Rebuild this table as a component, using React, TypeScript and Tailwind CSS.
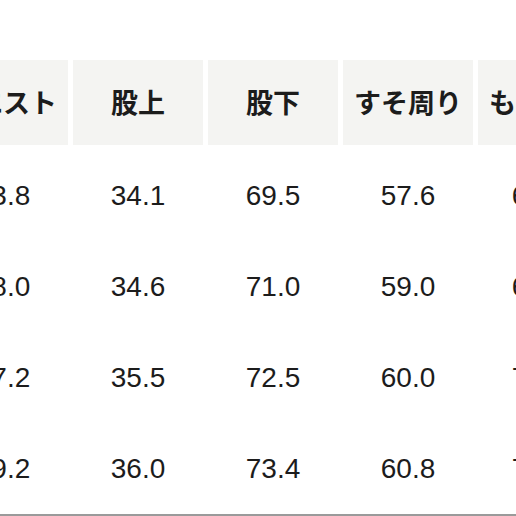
import React from "react";

const headers = ["ウエスト", "股上", "股下", "すそ周り", "もも周り"];
const rows = [
  ["73.8", "34.1", "69.5", "57.6", "63.5"],
  ["78.0", "34.6", "71.0", "59.0", "65.0"],
  ["77.2", "35.5", "72.5", "60.0", "70.2"],
  ["79.2", "36.0", "73.4", "60.8", "72.0"],
];

export default function App() {
  return (
    <div className="w-[516px] h-[516px] overflow-hidden bg-white">
      <div className="pt-[60px] ml-[-62px] w-[670px] flex flex-col">
        <div className="flex gap-[5px] h-[85px]">
          {headers.map((h) => (
            <div
              key={h}
              className="w-[130px] shrink-0 bg-[#f4f4f2] flex items-center justify-center text-[27px] font-bold text-[#1c1c1c] whitespace-nowrap"
              style={{ fontFamily: '"Noto Sans CJK JP", sans-serif' }}
            >
              {h}
            </div>
          ))}
        </div>
        <div className="mt-[5px] flex flex-col">
          {rows.map((r, i) => (
            <div key={i} className="flex gap-[5px] h-[91px]">
              {r.map((v, j) => (
                <div
                  key={j}
                  className={
                    j === 4
                      ? "w-[130px] shrink-0 flex items-center justify-center pr-[8px] text-[28px] text-[#1c1c1c]"
                      : "w-[130px] shrink-0 flex items-center justify-center text-[28px] text-[#1c1c1c]"
                  }
                  style={{ fontFamily: '"Liberation Sans", Arial, sans-serif' }}
                >
                  {v}
                </div>
              ))}
            </div>
          ))}
        </div>
        <div className="h-[2px] bg-[#9a9a9a]" />
      </div>
    </div>
  );
}
